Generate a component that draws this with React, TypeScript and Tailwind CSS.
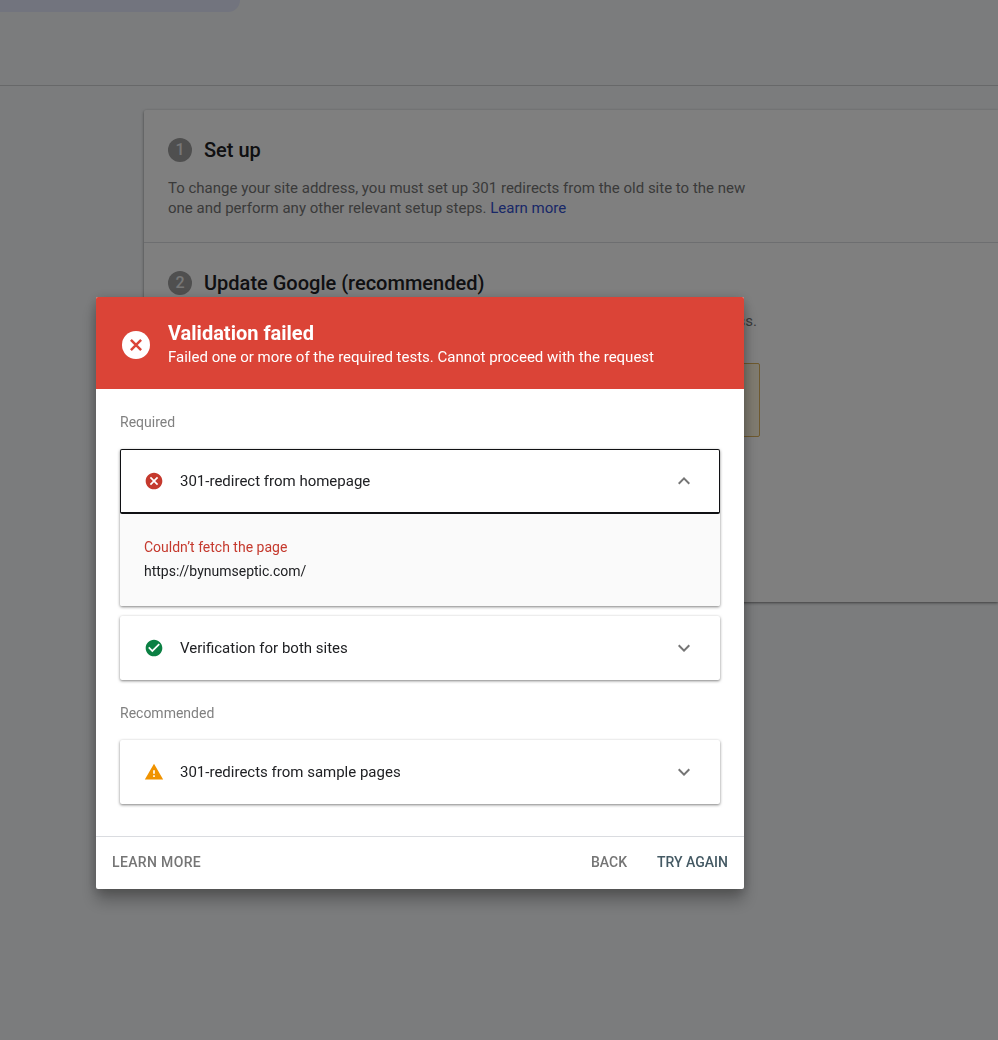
import type { ReactNode } from "react";
import { MdCancel, MdCheckCircle, MdExpandLess, MdExpandMore, MdWarning } from "react-icons/md";

function StepTitle({ number, children }: { number: number; children: ReactNode }) {
  return (
    <h2 className="flex items-center gap-3 text-xl leading-6 font-medium text-[#202124]">
      <span className="flex size-6 items-center justify-center rounded-full bg-[#9e9e9e] text-base leading-6 text-[#eeeeee]">
        {number}
      </span>
      {children}
    </h2>
  );
}

function PageBehind() {
  return (
    <div className="min-h-screen overflow-hidden bg-[#f6f8fa]">
      <header className="h-[86px] border-b border-[#cfd0d3]">
        <div className="h-3 w-60 rounded-br-xl bg-[#e4e8fc]" />
      </header>
      <main className="pt-6 pl-36">
        <div className="rounded-l-xs bg-white shadow-[0_1px_3px_rgba(0,0,0,0.5)]">
          <section className="border-b border-[#dadce0] px-6 pt-7 pb-6">
            <StepTitle number={1}>Set up</StepTitle>
            <p className="mt-4 max-w-[592px] text-[15px] leading-5 text-[#757575]">
              To change your site address, you must set up 301 redirects from the old site to the new one and perform any
              other relevant setup steps.{" "}
              <a href="#setup" className="text-[#3350d0]">
                Learn more
              </a>
            </p>
          </section>
          <section className="h-[359px] px-6 pt-7">
            <StepTitle number={2}>Update Google (recommended)</StepTitle>
            <p className="mt-4 max-w-[589px] text-right text-[15px] leading-5 text-[#757575]">
              Select the new site, then validate and submit the request to begin the process.
            </p>
            <div className="mt-8 h-[74px] max-w-[592px] rounded-xs border border-[#dcb25c] bg-[#fef7e0]" />
          </section>
        </div>
      </main>
    </div>
  );
}

function TestRow({ icon, title, open = false, children }: { icon: ReactNode; title: string; open?: boolean; children?: ReactNode }) {
  return (
    <div className="rounded-xs bg-white shadow-[0_1px_3px_rgba(0,0,0,0.5)]">
      <button
        type="button"
        aria-expanded={open}
        className={
          open
            ? "flex h-[65px] w-full items-center rounded-xs border border-b-2 border-[#101114] px-[23px] text-left"
            : "flex h-16 w-full items-center rounded-xs px-6 text-left"
        }
      >
        <span className="flex w-9 items-center">{icon}</span>
        <span className="flex-1 text-[15px] leading-5 text-[#202124]">{title}</span>
        {open ? <MdExpandLess className="size-6 text-[#757575]" /> : <MdExpandMore className="size-6 text-[#757575]" />}
      </button>
      {children}
    </div>
  );
}

export default function App() {
  return (
    <div className="font-[Roboto,sans-serif]">
      <PageBehind />
      <div className="fixed inset-0 overflow-auto bg-black/50 pt-[297px] pl-24">
        <div
          role="dialog"
          aria-modal="true"
          aria-labelledby="dialog-title"
          className="w-full max-w-[648px] rounded-xs bg-white shadow-[0_12px_16px_rgba(0,0,0,0.25),0_2px_12px_rgba(0,0,0,0.22)]"
        >
          <div className="flex items-center gap-4 rounded-t-xs bg-[#db4437] px-6 pt-6 pb-5 text-white">
            <svg viewBox="0 0 32 32" className="size-8 shrink-0" aria-hidden="true">
              <circle cx="16" cy="16" r="14" fill="#fff" />
              <path d="M10.9 10.9l10.2 10.2m0-10.2l-10.2 10.2" fill="none" stroke="#db4437" strokeWidth="2.5" />
            </svg>
            <div>
              <h1 id="dialog-title" className="text-xl leading-6 font-bold">
                Validation failed
              </h1>
              <p className="text-[15px] leading-6 font-normal">
                Failed one or more of the required tests. Cannot proceed with the request
              </p>
            </div>
          </div>
          <div className="px-6 pt-[23px] pb-8">
            <h2 className="text-sm leading-5 text-[#808080]">Required</h2>
            <div className="mt-[17px] flex flex-col gap-[10px]">
              <TestRow open icon={<MdCancel className="size-5 text-[#c5392d]" />} title="301-redirect from homepage">
                <div className="rounded-b-xs bg-[#fafafa] px-6 pt-[21px] pb-[23px] text-sm leading-6">
                  <p className="text-[#c5392d]">Couldn’t fetch the page</p>
                  <p className="text-[#202124]">https://bynumseptic.com/</p>
                </div>
              </TestRow>
              <TestRow icon={<MdCheckCircle className="size-5 text-[#0b8043]" />} title="Verification for both sites" />
            </div>
            <h2 className="mt-[23px] text-sm leading-5 text-[#808080]">Recommended</h2>
            <div className="mt-[17px]">
              <TestRow icon={<MdWarning className="size-5 text-[#f09300]" />} title="301-redirects from sample pages" />
            </div>
          </div>
          <div className="flex items-center border-t border-[#dadce0] px-4 pt-[15px] pb-[17px] text-sm leading-5 font-medium text-[#757575]">
            <button type="button" className="tracking-wide uppercase">
              Learn more
            </button>
            <button type="button" className="ml-auto uppercase">
              Back
            </button>
            <button type="button" className="ml-[30px] text-[#455a64] uppercase">
              Try again
            </button>
          </div>
        </div>
      </div>
    </div>
  );
}
